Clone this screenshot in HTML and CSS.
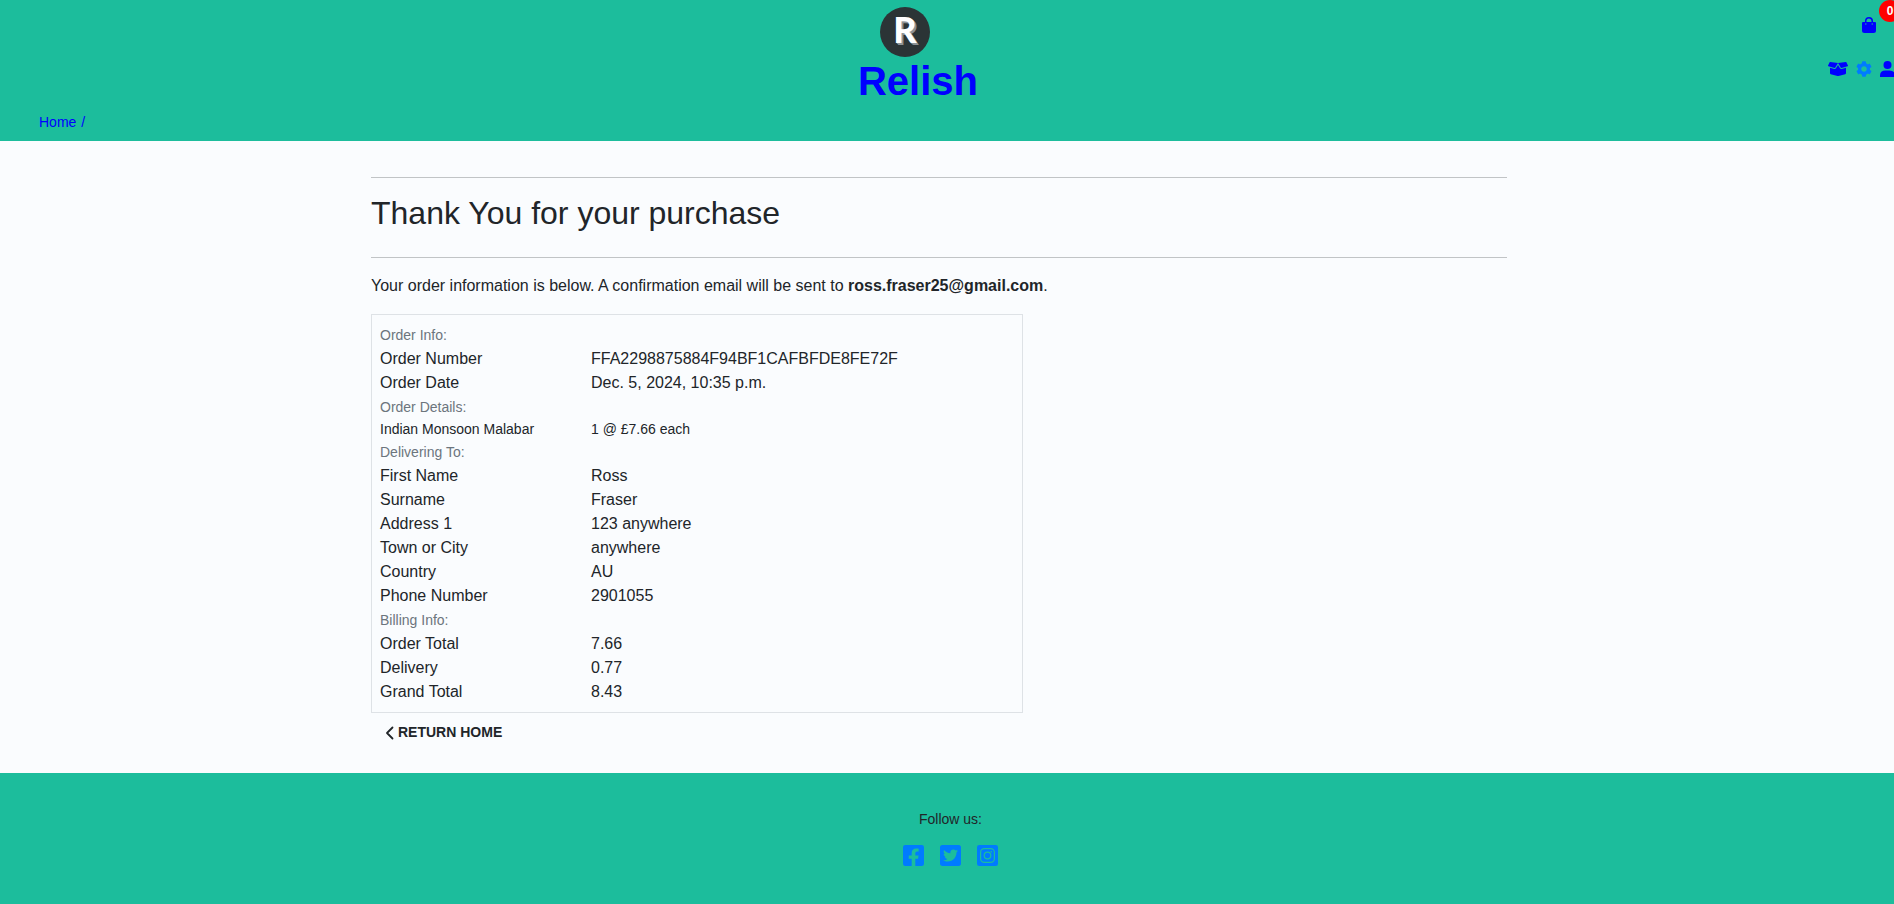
FILE: index.html
```html
<!DOCTYPE html>
<html lang="en">
<head>
<meta charset="utf-8">
<meta name="viewport" content="width=device-width, initial-scale=1">
<title>Relish</title>
<link rel="stylesheet" href="styles.css">
</head>
<body>
<header class="site-header">
  <div class="header-top">
    <a class="brand" href="#">
      <span class="brand-logo" aria-hidden="true">R</span>
      <span class="brand-name">Relish</span>
    </a>
    <nav class="header-nav" aria-label="Account">
      <a class="bag-link" href="#" aria-label="Shopping bag">
        <svg class="icon-bag" viewBox="0 0 14 16" aria-hidden="true"><path fill="currentColor" d="M3 5V4a4 4 0 0 1 8 0v1h2q1 0 1 1v7.500q0 2.500-2.500 2.500h-9Q0 16 0 13.500V6q0-1 1-1zm1.500 0h5V4a2.500 2.500 0 0 0-5 0z"/><circle cx="3.800" cy="7" r=".7" fill="#1cbd9c"/><circle cx="10.200" cy="7" r=".7" fill="#1cbd9c"/></svg>
        <span class="bag-count">0</span>
      </a>
      <div class="nav-row">
        <a href="#" aria-label="Products"><svg class="icon-box" viewBox="0 0 640 512" aria-hidden="true"><path fill="currentColor" d="M425.700 256c-16.900 0-32.800-9-41.400-23.400L320 126l-64.200 106.600c-8.700 14.500-24.600 23.500-41.500 23.500-4.500 0-9-.6-13.300-1.900L64 215v178c0 14.700 10 27.500 24.200 31l216.200 54.100c10.200 2.500 20.900 2.500 31 0L551.800 424c14.200-3.600 24.200-16.400 24.200-31V215l-137 39.100c-4.300 1.300-8.800 1.900-13.300 1.900zm212.600-112.200L586.800 41c-3.100-6.200-9.800-9.800-16.700-8.900L320 64l91.700 152.100c3.800 6.300 11.400 9.300 18.500 7.300l197.900-56.500c9.900-2.900 14.700-13.900 10.200-23.100zM53.200 41L1.700 143.800c-4.600 9.200.3 20.200 10.100 23l197.900 56.500c7.100 2 14.700-1 18.500-7.300L320 64 69.800 32.100c-6.900-.8-13.500 2.700-16.600 8.900z"/></svg></a>
        <a class="settings-link" href="#" aria-label="Settings"><svg class="icon-small" viewBox="0 0 512 512" aria-hidden="true"><path fill="currentColor" d="M487.400 315.700l-42.600-24.600c4.300-23.200 4.300-47 0-70.200l42.600-24.600c4.900-2.800 7.100-8.600 5.500-14-11.100-35.600-30-67.800-54.700-94.600-3.800-4.100-10-5.100-14.800-2.300L380.800 110c-17.900-15.400-38.500-27.300-60.800-35.100V25.800c0-5.600-3.900-10.500-9.400-11.700-36.700-8.200-74.300-7.800-109.200 0-5.500 1.200-9.400 6.100-9.400 11.700V75c-22.200 7.900-42.800 19.800-60.800 35.100L88.700 85.500c-4.900-2.800-11-1.900-14.800 2.300-24.700 26.700-43.600 58.900-54.700 94.600-1.700 5.400.6 11.200 5.500 14L67.300 221c-4.300 23.200-4.300 47 0 70.200l-42.600 24.600c-4.900 2.800-7.100 8.600-5.500 14 11.100 35.600 30 67.800 54.700 94.600 3.800 4.100 10 5.100 14.800 2.300l42.600-24.600c17.900 15.400 38.500 27.300 60.800 35.100v49.200c0 5.600 3.900 10.500 9.400 11.700 36.700 8.200 74.300 7.800 109.200 0 5.500-1.200 9.400-6.100 9.400-11.700v-49.200c22.200-7.900 42.800-19.800 60.800-35.100l42.600 24.600c4.900 2.800 11 1.900 14.800-2.300 24.700-26.700 43.600-58.900 54.700-94.600 1.500-5.500-.7-11.300-5.600-14.100zM256 346c-49 0-90-40-90-90s41-90 90-90 90 40 90 90-41 90-90 90z"/></svg></a>
        <a href="#" aria-label="Profile"><svg class="icon-small" viewBox="0 0 16 16" aria-hidden="true"><circle cx="7.500" cy="4" r="4" fill="currentColor"/><path fill="currentColor" d="M0 16v-1.500Q0 9.500 5.500 9.500h4q5.500 0 5.500 5V16z"/></svg></a>
      </div>
    </nav>
  </div>
  <nav class="breadcrumb" aria-label="Breadcrumb"><a href="#">Home</a><span>/</span></nav>
</header>

<main class="container">
  <hr>
  <h1>Thank You for your purchase</h1>
  <hr>
  <p class="intro">Your order information is below. A confirmation email will be sent to <strong>ross.fraser25@gmail.com</strong>.</p>
  <table class="order">
    <tbody>
      <tr class="section"><th colspan="2">Order Info:</th></tr>
      <tr><th>Order Number</th><td>FFA2298875884F94BF1CAFBFDE8FE72F</td></tr>
      <tr><th>Order Date</th><td>Dec. 5, 2024, 10:35 p.m.</td></tr>
      <tr class="section"><th colspan="2">Order Details:</th></tr>
      <tr class="item"><th>Indian Monsoon Malabar</th><td>1 @ £7.66 each</td></tr>
      <tr class="section"><th colspan="2">Delivering To:</th></tr>
      <tr><th>First Name</th><td>Ross</td></tr>
      <tr><th>Surname</th><td>Fraser</td></tr>
      <tr><th>Address 1</th><td>123 anywhere</td></tr>
      <tr><th>Town or City</th><td>anywhere</td></tr>
      <tr><th>Country</th><td>AU</td></tr>
      <tr><th>Phone Number</th><td>2901055</td></tr>
      <tr class="section"><th colspan="2">Billing Info:</th></tr>
      <tr><th>Order Total</th><td>7.66</td></tr>
      <tr><th>Delivery</th><td>0.77</td></tr>
      <tr><th>Grand Total</th><td>8.43</td></tr>
    </tbody>
  </table>
  <a class="return-link" href="#"><svg viewBox="0 0 9 14" aria-hidden="true"><path d="M7.500 1.500L2 7l5.500 5.500" fill="none" stroke="currentColor" stroke-width="1.800" stroke-linecap="round" stroke-linejoin="round"/></svg>RETURN HOME</a>
</main>

<footer class="site-footer">
  <p>Follow us:</p>
  <div class="social">
    <a href="#" aria-label="Facebook"><svg viewBox="0 32 448 448" aria-hidden="true"><path fill="currentColor" d="M400 32H48A48 48 0 0 0 0 80v352a48 48 0 0 0 48 48h137.250V327.690h-63V256h63v-54.640c0-62.150 37-96.480 93.670-96.480 27.140 0 55.520 4.840 55.520 4.840v61h-31.270c-30.810 0-40.420 19.120-40.420 38.730V256h68.780l-11 71.690h-57.780V480H400a48 48 0 0 0 48-48V80a48 48 0 0 0-48-48z"/></svg></a>
    <a href="#" aria-label="Twitter"><svg viewBox="0 32 448 448" aria-hidden="true"><path fill="currentColor" d="M400 32H48C21.500 32 0 53.500 0 80v352c0 26.500 21.500 48 48 48h352c26.500 0 48-21.500 48-48V80c0-26.500-21.500-48-48-48zm-48.900 158.800c.2 2.800.2 5.700.2 8.500 0 86.700-66 186.600-186.600 186.600-37.200 0-71.700-10.800-100.700-29.400 5.300.6 10.400.8 15.800.8 30.700 0 58.900-10.400 81.400-28-28.800-.6-53-19.500-61.300-45.500 10.100 1.500 19.200 1.500 29.600-1.200-30-6.100-52.500-32.500-52.500-64.400v-.8c8.700 4.900 18.900 7.900 29.600 8.300a65.447 65.447 0 0 1-29.200-54.600c0-12.200 3.200-23.400 8.900-33.100 32.300 39.800 80.800 65.800 135.200 68.600-9.300-44.500 24-80.600 64-80.600 18.900 0 35.900 7.900 47.900 20.700 14.800-2.800 29-8.300 41.600-15.800-4.900 15.200-15.200 28-28.800 36.100 13.200-1.400 26-5.100 37.800-10.200-8.900 13.100-20.100 24.700-32.900 34z"/></svg></a>
    <a href="#" aria-label="Instagram"><svg viewBox="0 0 21 21" aria-hidden="true"><rect width="21" height="21" rx="2.200" fill="currentColor"/><g fill="none" stroke="#1cbd9c" stroke-width="1.200"><rect x="3.600" y="3.600" width="13.800" height="13.800" rx="3.800"/><circle cx="10.500" cy="10.500" r="3.300"/></g><circle cx="14.300" cy="6.800" r=".8" fill="#1cbd9c"/></svg></a>
  </div>
</footer>
</body>
</html>
```
FILE: styles.css
```css
*, *::before, *::after { box-sizing: border-box; }

body {
  margin: 0;
  min-height: 100vh;
  display: flex;
  flex-direction: column;
  background: #fafcfe;
  color: #212529;
  font: 16px/24px "Liberation Sans", Arial, sans-serif;
}

a { color: #00f; text-decoration: none; }
svg { display: block; }

.site-header {
  background: #1cbd9c;
  overflow: hidden;
  padding-bottom: 8px;
}

.header-top {
  display: grid;
  grid-template-columns: 1fr auto 1fr;
  padding-top: 7px;
}

.brand {
  grid-column: 2;
  margin-right: 58px;
}

.brand-logo {
  display: flex;
  justify-content: center;
  width: 50px;
  height: 50px;
  margin-left: 22px;
  border-radius: 50%;
  background: #2b3436;
  color: #fff;
  font: 900 36px/45px Lato, sans-serif;
  text-shadow: 1px 1px #8d9294, 2px 2px #8d9294;
}

.brand-name {
  display: block;
  font-size: 40px;
  font-weight: 700;
  line-height: 48px;
}

.header-nav {
  grid-column: 3;
  justify-self: end;
  display: flex;
  flex-direction: column;
  align-items: center;
  gap: 28px;
  margin-right: -2px;
  padding-top: 10px;
}

.bag-link { position: relative; margin-left: 14px; }
.icon-bag { width: 14px; height: 16px; }

.bag-count {
  position: absolute;
  left: 17px;
  top: -17px;
  width: 22px;
  height: 22px;
  border-radius: 50%;
  background: #f00;
  color: #fff;
  font-size: 12px;
  font-weight: 700;
  line-height: 22px;
  text-align: center;
}

.nav-row {
  display: flex;
  align-items: center;
  gap: 8px;
}

.icon-box { width: 20px; height: 16px; }
.icon-small { width: 16px; height: 16px; }
.settings-link { color: #007bff; }

.breadcrumb {
  display: flex;
  gap: 5px;
  margin-top: 7px;
  padding-left: 39px;
  color: #00f;
  font-size: 14px;
  line-height: 21px;
}

.container {
  width: 100%;
  max-width: 1166px;
  margin: 0 auto;
  padding: 20px 23px 20px 7px;
}

hr {
  margin: 16px 0;
  border: 0;
  border-top: 1px solid #c1c4c6;
}

h1 {
  margin: 0 0 24px;
  font-size: 32px;
  font-weight: 400;
  line-height: 39px;
}

.intro { margin: 0 0 16px; }

.order {
  display: block;
  width: 100%;
  max-width: 652px;
  padding: 8px;
  border: 1px solid #dee2e6;
  border-spacing: 0;
}

.order th, .order td {
  padding: 0;
  font-weight: 400;
  text-align: left;
}

.order th { min-width: 211px; }
.order .section th { color: #6c757d; font-size: 14px; }
.order .item th, .order .item td { font-size: 14px; line-height: 21px; }

.return-link {
  display: inline-flex;
  align-items: center;
  gap: 4px;
  padding: 9px 14px 10px;
  color: #212529;
  font-size: 14px;
  font-weight: 700;
  line-height: 21px;
}

.return-link svg { width: 9px; height: 14px; }

.site-footer {
  flex: 1;
  display: flex;
  flex-direction: column;
  align-items: center;
  padding: 36px 0 32px 7px;
  background: #1cbd9c;
  font-size: 14px;
  line-height: 21px;
}

.site-footer p { margin: 0 0 15px; }
.social { display: flex; gap: 16px; }
.social a { color: #007bff; }
.social svg { width: 21px; height: 21px; }
```
